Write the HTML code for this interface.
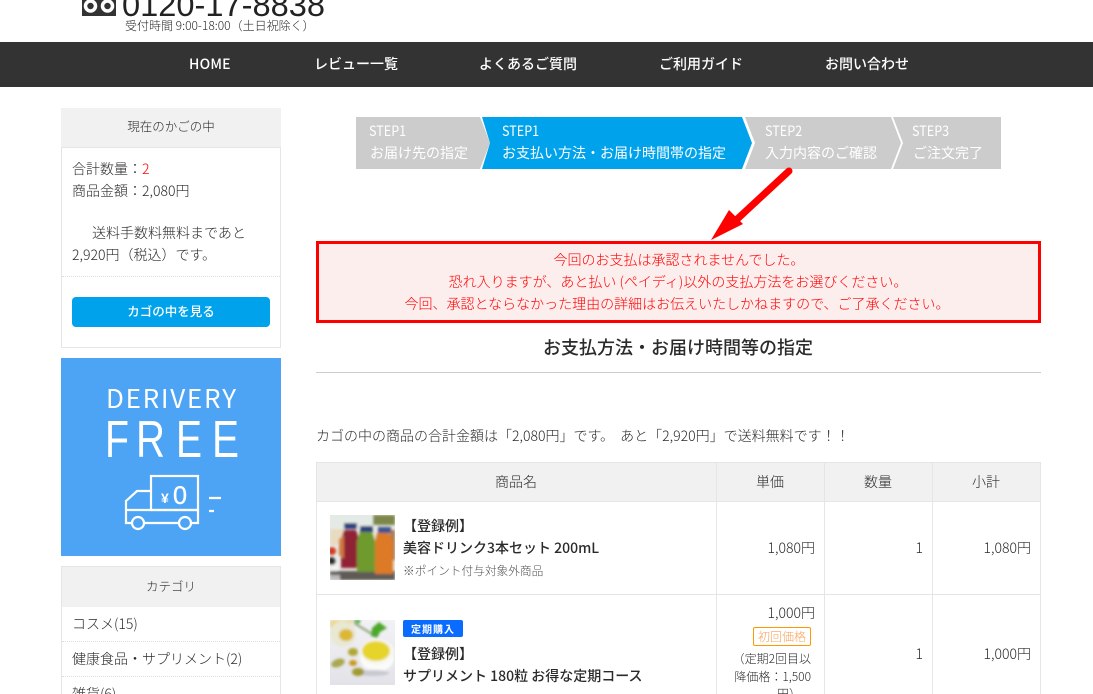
<!DOCTYPE html>
<html lang="ja"><head><meta charset="utf-8"><title>お支払方法</title>
<style>
html,body{margin:0;padding:0;background:#fff;width:1093px;height:694px;overflow:hidden}
#w{width:1093px;height:694px;overflow:hidden;position:relative;font-family:"Noto Sans CJK JP","Liberation Sans",sans-serif;font-size:14px;font-weight:300;color:#2b2b2b}
.t{position:absolute;white-space:nowrap;line-height:20px;height:20px}
.c{text-align:center;transform:translateX(-50%)}
.r{transform:translateX(-100%)}
.b{position:absolute;box-sizing:border-box}
.nav{color:#fff;font-weight:500;font-size:14px;top:54px}
.st{color:#fff;font-size:14px;font-weight:400}
.sn{color:#fff;font-size:14px;font-weight:400;transform-origin:0 50%;transform:scaleX(.9)}
.red{color:#f00}
.bd{font-weight:500}
</style></head><body><div id="w">

<!-- header -->
<svg class="b" style="left:82px;top:0" width="34" height="16"><rect width="34" height="16" fill="#333"/><circle cx="8.5" cy="6" r="5" fill="#333" stroke="#fff" stroke-width="3.5"/><circle cx="25.5" cy="6" r="5" fill="#333" stroke="#fff" stroke-width="3.5"/></svg>
<svg class="b" style="left:120px;top:0" width="210" height="20"><text x="2" y="16" font-family="Liberation Sans" font-size="32" textLength="203" lengthAdjust="spacingAndGlyphs" fill="#222">0120-17-8838</text></svg>
<div class="t" style="left:125px;top:16px;font-size:12px">受付時間 9:00-18:00（土日祝除く）</div>

<div class="b" style="left:0;top:42px;width:1093px;height:45px;background:#333"></div>
<div class="t nav" style="left:189px;letter-spacing:.2px">HOME</div>
<div class="t nav" style="left:314px">レビュー一覧</div>
<div class="t nav" style="left:479px">よくあるご質問</div>
<div class="t nav" style="left:659px">ご利用ガイド</div>
<div class="t nav" style="left:825px">お問い合わせ</div>

<!-- sidebar cart -->
<div class="b" style="left:61px;top:108px;width:220px;height:240px;border:1px solid #e5e5e5;border-top:0"></div>
<div class="b" style="left:61px;top:108px;width:220px;height:40px;background:#f1f1f1;border-bottom:1px solid #e5e5e5"></div>
<div class="t c" style="left:171px;top:116px;font-size:12.5px">現在のかごの中</div>
<div class="t" style="left:72px;top:159px">合計数量：<span class="red">2</span></div>
<div class="t" style="left:72px;top:181px">商品金額：2,080円</div>
<div class="t" style="left:92px;top:223px">送料手数料無料まであと</div>
<div class="t" style="left:72px;top:245px">2,920円（税込）です。</div>
<div class="b" style="left:62px;top:276px;width:218px;border-top:1px dotted #ddd"></div>
<div class="b" style="left:72px;top:297px;width:198px;height:30px;background:#00a3eb;border-radius:4px"></div>
<div class="t c bd" style="left:171px;top:301px;font-size:12.5px;color:#fff">カゴの中を見る</div>

<!-- banner -->
<div class="b" style="left:61px;top:358px;width:220px;height:198px;background:#4da4f4"></div>
<svg class="b" style="left:61px;top:358px" width="220" height="198" fill="none" stroke="#fff" stroke-width="2.2">
<g font-family="Liberation Sans" fill="#fff" stroke="none">
<text x="45" y="50" font-family="Noto Sans CJK JP" font-weight="400" font-size="26" textLength="130" lengthAdjust="spacing">DERIVERY</text>
<text x="44" y="99" font-size="52" textLength="24" lengthAdjust="spacingAndGlyphs">F</text>
<text x="75" y="99" font-size="52" textLength="29" lengthAdjust="spacingAndGlyphs">R</text>
<text x="115" y="99" font-size="52" textLength="26" lengthAdjust="spacingAndGlyphs">E</text>
<text x="151" y="99" font-size="52" textLength="27" lengthAdjust="spacingAndGlyphs">E</text>
<text x="100" y="145" font-size="14" font-weight="700">¥</text>
<text x="112" y="146" font-size="25" textLength="14" lengthAdjust="spacingAndGlyphs" stroke="#fff" stroke-width=".4">0</text>
</g>
<rect x="90" y="118" width="47" height="34"/>
<path d="M90 133H76L65 143V165H71M83 165H118M130 165H137V152M65 152H137"/>
<circle cx="77" cy="165" r="6"/><circle cx="124" cy="165" r="6"/>
<path d="M148 140H160M148 153H153"/>
</svg>

<!-- category -->
<div class="b" style="left:61px;top:566px;width:220px;height:140px;border:1px solid #e5e5e5"></div>
<div class="b" style="left:61px;top:566px;width:220px;height:41px;background:#f1f1f1;border:1px solid #e5e5e5;border-bottom:0"></div>
<div class="t c" style="left:171px;top:576px;font-size:12.5px">カテゴリ</div>
<div class="t" style="left:72px;top:614px">コスメ(15)</div>
<div class="b" style="left:62px;top:641px;width:218px;border-top:1px dotted #ddd"></div>
<div class="t" style="left:72px;top:649px">健康食品・サプリメント(2)</div>
<div class="b" style="left:62px;top:676px;width:218px;border-top:1px dotted #ddd"></div>
<div class="t" style="left:72px;top:684px">雑貨(6)</div>

<!-- steps -->
<svg class="b" style="left:356px;top:117px" width="650" height="52">
<polygon points="0,0 124,0 134,26 124,52 0,52" fill="#ccc"/>
<polygon points="126,0 386,0 396,26 386,52 126,52 134,26" fill="#00a3eb"/>
<polygon points="389,0 535,0 545,26 535,52 389,52 399,26" fill="#ccc"/>
<polygon points="537,0 645,0 645,52 537,52 547,26" fill="#ccc"/>
</svg>
<div class="t sn" style="left:369px;top:121px">STEP1</div>
<div class="t st" style="left:370px;top:143px">お届け先の指定</div>
<div class="t sn" style="left:502px;top:121px">STEP1</div>
<div class="t st" style="left:502px;top:143px">お支払い方法・お届け時間帯の指定</div>
<div class="t sn" style="left:765px;top:121px">STEP2</div>
<div class="t st" style="left:765px;top:143px">入力内容のご確認</div>
<div class="t sn" style="left:912px;top:121px">STEP3</div>
<div class="t st" style="left:913px;top:143px">ご注文完了</div>

<!-- arrow -->
<svg class="b" style="left:700px;top:160px" width="100" height="85">
<path d="M89 11L33 63" stroke="#f00" stroke-width="7" stroke-linecap="round" fill="none"/>
<polygon points="11,80 29,50 43,64" fill="#f00"/>
</svg>

<!-- alert -->
<div class="b" style="left:316px;top:241px;width:725px;height:82px;border:3px solid #f00;background:#fdeeee"></div>
<div class="t c red" style="left:679px;top:250px">今回のお支払は承認されませんでした。</div>
<div class="t c red" style="left:678px;top:272px">恐れ入りますが、あと払い (ペイディ)以外の支払方法をお選びください。</div>
<div class="t c red" style="left:677px;top:294px">今回、承認とならなかった理由の詳細はお伝えいたしかねますので、ご了承ください。</div>

<div class="t c bd" style="left:678px;top:337px;font-size:18px">お支払方法・お届け時間等の指定</div>
<div class="b" style="left:316px;top:372px;width:725px;height:1px;background:#ccc"></div>
<div class="t" style="left:316px;top:426px;word-spacing:3px">カゴの中の商品の合計金額は「2,080円」です。 あと「2,920円」で送料無料です！！</div>

<!-- table -->
<div class="b" style="left:316px;top:462px;width:725px;height:40px;background:#f1f1f1"></div>
<div class="b" style="left:316px;top:462px;width:725px;height:250px;border:1px solid #e5e5e5"></div>
<div class="b" style="left:316px;top:501px;width:725px;height:1px;background:#e5e5e5"></div>
<div class="b" style="left:316px;top:594px;width:725px;height:1px;background:#e5e5e5"></div>
<div class="b" style="left:716px;top:462px;width:1px;height:240px;background:#e5e5e5"></div>
<div class="b" style="left:824px;top:462px;width:1px;height:240px;background:#e5e5e5"></div>
<div class="b" style="left:932px;top:462px;width:1px;height:240px;background:#e5e5e5"></div>
<div class="t c" style="left:516px;top:472px">商品名</div>
<div class="t c" style="left:770px;top:472px">単価</div>
<div class="t c" style="left:878px;top:472px">数量</div>
<div class="t c" style="left:986px;top:472px">小計</div>

<svg class="b" style="left:330px;top:515px" width="65" height="65" viewBox="0 0 65 65">
<defs><filter id="bl" x="-10%" y="-10%" width="120%" height="120%"><feGaussianBlur stdDeviation="1.2"/></filter></defs>
<rect width="65" height="65" fill="#e8e8e2"/>
<g filter="url(#bl)">
<rect x="0" y="0" width="45" height="14" fill="#e4ebe6"/>
<rect x="43" y="0" width="22" height="10" fill="#7c8748"/>
<rect x="0" y="14" width="14" height="16" fill="#e8dcc0"/>
<rect x="60" y="15" width="5" height="30" fill="#b07a50"/>
<rect x="0" y="42" width="8" height="23" fill="#f4f4f4"/>
<circle cx="2" cy="36" r="4" fill="#d63a20"/><circle cx="2" cy="46" r="4" fill="#2a3020"/>
<rect x="0" y="56" width="65" height="9" fill="#5f5a55"/>
<rect x="0" y="60" width="10" height="5" fill="#bbb"/>
<path d="M14 15H26L29 24V53H11V24Z" fill="#8f2236"/>
<path d="M9 24L14 20V44L9 40Z" fill="#d07840"/>
<path d="M30 17H42L45 26V57H27V26Z" fill="#6e9a2e"/>
<path d="M47 18H59L63 27V59H45V27Z" fill="#dc7a28"/>
<rect x="14" y="8" width="13" height="6" fill="#2c3f7a"/>
<rect x="30" y="11" width="13" height="6" fill="#2c3f7a"/>
<rect x="48" y="12" width="13" height="6" fill="#3c5590"/>
</g></svg>

<div class="t bd" style="left:403px;top:516px">【登録例】</div>
<div class="t bd" style="left:403px;top:538px">美容ドリンク3本セット 200mL</div>
<div class="t" style="left:403px;top:561px;font-size:11.7px;color:#555">※ポイント付与対象外商品</div>
<div class="t r" style="left:815px;top:538px">1,080円</div>
<div class="t r" style="left:923px;top:538px">1</div>
<div class="t r" style="left:1031px;top:538px">1,080円</div>

<svg class="b" style="left:330px;top:620px" width="65" height="65" viewBox="0 0 65 65">
<defs><linearGradient id="g2" x1="0" y1="0" x2="0" y2="1"><stop offset="0" stop-color="#f2f2f6"/><stop offset="1" stop-color="#e2e2e8"/></linearGradient></defs>
<rect width="65" height="65" fill="url(#g2)"/>
<g filter="url(#bl)">
<rect width="22" height="8" fill="#ecd890"/>
<ellipse cx="13" cy="14" rx="13" ry="13" fill="#e8e8d4"/>
<ellipse cx="16" cy="15" rx="7" ry="6" fill="#dcb830"/>
<path d="M24 3L42 14" stroke="#8aa070" stroke-width="2"/>
<path d="M22 0H31L29 4ZM42 8L49 2L57 8L50 12L47 18L41 16Z" fill="#4ea82c"/>
<ellipse cx="47" cy="38" rx="17" ry="14" fill="#fbfbfb"/>
<ellipse cx="47" cy="32" rx="17" ry="13" fill="#f8f8f0"/>
<ellipse cx="46" cy="31" rx="14" ry="10" fill="#e6d42a"/>
<ellipse cx="43" cy="53" rx="16" ry="3" fill="#c8c8d0"/>
<ellipse cx="23" cy="32" rx="5" ry="4" fill="#b0a830"/>
<ellipse cx="23" cy="43" rx="4" ry="3" fill="#c89820"/>
<ellipse cx="28" cy="52" rx="6" ry="4" fill="#a09a30"/>
<ellipse cx="8" cy="43" rx="7" ry="4" fill="#a8a850" transform="rotate(-20 8 43)"/>
</g></svg>

<div class="b" style="left:403px;top:620px;width:60px;height:17px;background:#0a6cff;border-radius:2px"></div>
<div class="t c" style="left:433px;top:619px;font-size:10px;font-weight:700;color:#fff;letter-spacing:1px">定期購入</div>
<div class="t bd" style="left:403px;top:644px">【登録例】</div>
<div class="t bd" style="left:403px;top:666px">サプリメント 180粒 お得な定期コース</div>

<div class="t r" style="left:815px;top:603px">1,000円</div>
<div class="b" style="left:753px;top:627px;width:58px;height:19px;border:1px solid #f90;border-radius:2px"></div>
<div class="t c" style="left:782px;top:627px;font-size:12px;color:#f9a05a">初回価格</div>
<div class="t r" style="left:811px;top:649px;font-size:12px">（定期2回目以</div>
<div class="t r" style="left:811px;top:667px;font-size:12px">降価格：1,500</div>
<div class="t r" style="left:801px;top:684px;font-size:12px">円）</div>
<div class="t r" style="left:923px;top:644px">1</div>
<div class="t r" style="left:1031px;top:644px">1,000円</div>

</div></body></html>
